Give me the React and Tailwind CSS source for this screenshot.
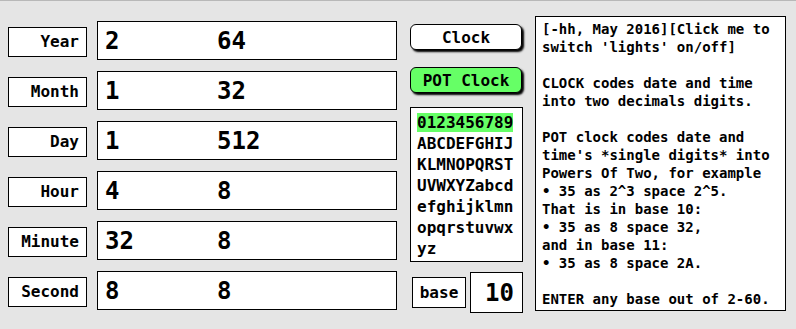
const rows = [
  ['Year', '2', '64'],
  ['Month', '1', '32'],
  ['Day', '1', '512'],
  ['Hour', '4', '8'],
  ['Minute', '32', '8'],
  ['Second', '8', '8'],
];

const charLines = ['ABCDEFGHIJ', 'KLMNOPQRST', 'UVWXYZabcd', 'efghijklmn', 'opqrstuvwx', 'yz'];

const info = `[-hh, May 2016][Click me to
switch 'lights' on/off]

CLOCK codes date and time
into two decimals digits.

POT clock codes date and
time's *single digits* into
Powers Of Two, for example
• 35 as 2^3 space 2^5.
That is in base 10:
• 35 as 8 space 32,
and in base 11:
• 35 as 8 space 2A.

ENTER any base out of 2-60.`;

export default function App() {
  return (
    <div className="w-[796px] h-[329px] bg-[#e5e5e5] border-t border-[#b8b8b8] flex font-['DejaVu_Sans_Mono',monospace] font-bold text-black overflow-hidden">
      <div className="flex flex-col gap-[11px] pl-[8px] pt-[20px]">
        {rows.map(([label, a, b]) => (
          <div key={label} className="flex items-center gap-[10px]">
            <div className="w-[79px] h-[30px] bg-white border border-black flex items-center justify-end pr-[7px] text-[16px] mt-[3px]">
              {label}
            </div>
            <div className="w-[300px] h-[39px] bg-white border border-black flex items-center pl-[7px] text-[24px]">
              <span className="w-[112px]">{a}</span>
              <span>{b}</span>
            </div>
          </div>
        ))}
      </div>

      <div className="w-[113px] ml-[13px] pt-[23px] flex flex-col">
        <button className="h-[26px] w-[112px] bg-white border border-black rounded-[6px] shadow-[2px_2px_2px_#000] text-[16px] leading-none pt-[2px]">
          Clock
        </button>
        <button className="mt-[17px] h-[26px] w-[112px] bg-[#66ff66] border border-black rounded-[6px] shadow-[2px_2px_2px_#000] text-[16px] leading-none pt-[2px]">
          POT Clock
        </button>
        <div className="mt-[14px] w-[113px] h-[155px] bg-white border border-black pl-[6px] pt-[4px] text-[16px] leading-[21px]">
          <div><span className="bg-[#66ff66]">0123456789</span></div>
          {charLines.map((l) => (
            <div key={l}>{l}</div>
          ))}
        </div>
        <div className="mt-[10px] flex items-center">
          <div className="ml-[2px] w-[54px] h-[31px] bg-white border border-black flex items-center justify-center text-[16px]">
            base
          </div>
          <div className="ml-[4px] w-[53px] h-[41px] bg-white border border-black flex items-center justify-end pr-[8px] text-[24px]">
            10
          </div>
        </div>
      </div>

      <div className="ml-[12px] mt-[15px] w-[251px] h-[295px] bg-white border border-black pl-[6px] pt-[3px] text-[14px] leading-[18px] whitespace-pre">
        {info}
      </div>
    </div>
  );
}
